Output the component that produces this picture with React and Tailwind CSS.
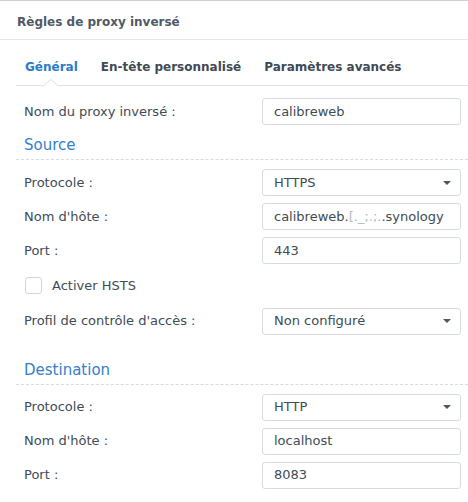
import React from "react";

function Caret() {
  return (
    <svg width="8" height="4" viewBox="0 0 8 4" className="shrink-0">
      <path d="M0 0 L8 0 L4 4 Z" fill="#4f5760" />
    </svg>
  );
}

function Field({ children, select }) {
  return (
    <div className="flex h-[27px] w-[199px] items-center overflow-hidden whitespace-nowrap rounded-[3px] border border-[#d6dce2] bg-white pl-[11px] pr-[9px] text-[13px] text-[#414b55]">
      <span className="flex-1 overflow-hidden">{children}</span>
      {select && <Caret />}
    </div>
  );
}

function Row({ label, children, select }) {
  return (
    <div className="flex items-center pr-[7px]">
      <div className="flex-1 pl-[8px] text-[13px] text-[#414b55]">{label}</div>
      <Field select={select}>{children}</Field>
    </div>
  );
}

function Heading({ children, className }) {
  return (
    <div
      className={`flex items-end border-b border-dashed border-[#d3dbe3] pb-[4px] pl-[8px] text-[15px] leading-[20px] text-[#3580c9] ${className}`}
    >
      {children}
    </div>
  );
}

export default function App() {
  return (
    <div className="h-[502px] w-[468px] overflow-hidden border-t border-[#cdd1d4] bg-white font-['DejaVu_Sans',Verdana,sans-serif]">
      <div className="flex h-[39px] items-center border-b border-[#e4e8eb] pl-[17px] pt-[3px] text-[12px] font-bold text-[#505a64]">
        Règles de proxy inversé
      </div>

      <div className="pl-[16px]">
        <div className="flex h-[46px] items-center gap-[23px] border-b border-[#dde2e6] pl-[9px] pt-[9px] text-[12px] font-bold">
          <div className="relative flex h-full items-center text-[#2b7bca]">
            Général
            <svg
              width="14"
              height="7"
              viewBox="0 0 14 7"
              className="absolute bottom-[-1px] left-[19px]"
            >
              <path d="M0 7 L7 0.5 L14 7 Z" fill="#ffffff" />
              <path d="M0 6.5 L7 0.5 L14 6.5" fill="none" stroke="#dde2e6" strokeWidth="1" />
            </svg>
          </div>
          <div className="text-[#3f4a55]">En-tête personnalisé</div>
          <div className="text-[#3f4a55]">Paramètres avancés</div>
        </div>

        <div className="mt-[12px]">
          <Row label="Nom du proxy inversé :">calibreweb</Row>
        </div>

        <Heading className="h-[35px]">Source</Heading>

        <div className="mt-[9px] flex flex-col gap-[7px]">
          <Row label="Protocole :" select>
            HTTPS
          </Row>
          <Row label="Nom d'hôte :">
            calibreweb.<span className="text-[#b4bac0]">[._;.;.</span>.synology
          </Row>
          <Row label="Port :">443</Row>
        </div>

        <div className="mt-[12px] flex items-center pl-[9px]">
          <div className="h-[17px] w-[17px] rounded-[3px] border border-[#cfd6dd] bg-white" />
          <span className="ml-[10px] text-[13px] text-[#414b55]">Activer HSTS</span>
        </div>

        <div className="mt-[12px]">
          <Row label="Profil de contrôle d'accès :" select>
            Non configuré
          </Row>
        </div>

        <Heading className="h-[50px]">Destination</Heading>

        <div className="mt-[9px] flex flex-col gap-[7px]">
          <Row label="Protocole :" select>
            HTTP
          </Row>
          <Row label="Nom d'hôte :">localhost</Row>
          <Row label="Port :">8083</Row>
        </div>
      </div>
    </div>
  );
}
